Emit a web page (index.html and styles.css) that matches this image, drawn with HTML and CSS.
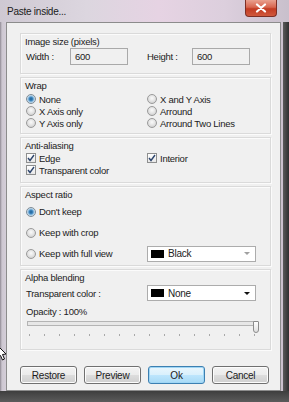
FILE: index.html
```html
<!DOCTYPE html>
<html lang="en">
  <head>
    <meta charset="UTF-8" />
    <title>Paste inside...</title>
    <link rel="stylesheet" href="styles.css">
  </head>
  <body>
    <div class="window">
      <div class="titlebar">
        <span class="title">Paste inside...</span>
        <div class="close-btn">
          <svg width="12" height="10" viewBox="0 0 12 10"><path d="M2 1.5 L10 8.5 M10 1.5 L2 8.5" stroke="#fff" stroke-width="2.2" stroke-linecap="round"/></svg>
        </div>
      </div>
      <div class="frame">
        <div class="client">

          <section class="group group-size">
            <div class="group-label">Image size (pixels)</div>
            <div class="size-row">
              <span>Width :</span>
              <div class="num-field">600</div>
              <span></span>
              <span>Height :</span>
              <div class="num-field">600</div>
            </div>
          </section>

          <section class="group group-wrap">
            <div class="group-label">Wrap</div>
            <div class="opt-grid">
              <label class="opt"><span class="radio checked"></span>None</label>
              <label class="opt"><span class="radio"></span>X and Y Axis</label>
              <label class="opt"><span class="radio"></span>X Axis only</label>
              <label class="opt"><span class="radio"></span>Arround</label>
              <label class="opt"><span class="radio"></span>Y Axis only</label>
              <label class="opt"><span class="radio"></span>Arround Two Lines</label>
            </div>
          </section>

          <section class="group group-aa">
            <div class="group-label">Anti-aliasing</div>
            <div class="opt-grid">
              <label class="opt"><span class="check"><svg width="8" height="8" viewBox="0 0 8 8"><path d="M1 4 L3 6.5 L7 1" fill="none" stroke="#2e466e" stroke-width="1.4"/></svg></span>Edge</label>
              <label class="opt"><span class="check"><svg width="8" height="8" viewBox="0 0 8 8"><path d="M1 4 L3 6.5 L7 1" fill="none" stroke="#2e466e" stroke-width="1.4"/></svg></span>Interior</label>
              <label class="opt"><span class="check"><svg width="8" height="8" viewBox="0 0 8 8"><path d="M1 4 L3 6.5 L7 1" fill="none" stroke="#2e466e" stroke-width="1.4"/></svg></span>Transparent color</label>
            </div>
          </section>

          <section class="group group-aspect">
            <div class="group-label">Aspect ratio</div>
            <div class="aspect-grid">
              <label class="opt"><span class="radio checked"></span>Don't keep</label>
              <span></span>
              <label class="opt"><span class="radio"></span>Keep with crop</label>
              <span></span>
              <label class="opt"><span class="radio"></span>Keep with full view</label>
              <div class="combo">
                <span class="swatch"></span>
                <span class="combo-text">Black</span>
                <span class="arrow arrow-dim"></span>
              </div>
            </div>
          </section>

          <section class="group group-alpha">
            <div class="group-label">Alpha blending</div>
            <div class="transp-row">
              <span>Transparent color :</span>
              <div class="combo">
                <span class="swatch"></span>
                <span class="combo-text">None</span>
                <span class="arrow"></span>
              </div>
            </div>
            <div class="opacity-label">Opacity : 100%</div>
            <div class="slider">
              <div class="track"></div>
              <div class="thumb"></div>
            </div>
            <div class="ticks">
              <i></i><i></i><i></i><i></i><i></i><i></i><i></i><i></i>
              <i></i><i></i><i></i><i></i><i></i><i></i><i></i><i></i>
            </div>
          </section>

          <div class="buttons">
            <button class="btn">Restore</button>
            <button class="btn">Preview</button>
            <button class="btn btn-default">Ok</button>
            <button class="btn">Cancel</button>
          </div>

        </div>
      </div>
      <svg class="cursor" width="7" height="16" viewBox="0 0 7 16"><path d="M-2 0 L6 8 L2.5 8.5 L4.5 13 L2.5 14 L0.5 9.5 L-2 12 Z" fill="#fff" stroke="#111" stroke-width="1"/></svg>
    </div>
  </body>
</html>
```

FILE: styles.css
```css
body{
  margin: 0;
  background-color: #ffffff;
  font-family: "Liberation Sans", Arial, sans-serif;
  font-size: 9.5px;
  letter-spacing: -0.25px;
  color: #222222;
}
.window{
  width: 289px;
  height: 402px;
  position: relative;
  display: flex;
  flex-direction: column;
  overflow: hidden;
  background: linear-gradient(to right, #cfc9d3 0, #dcd6df 30%, #e6d3e3 55%, #dccfdd 78%, #c9c0cc 100%);
}
.titlebar{
  height: 22px;
  display: flex;
  align-items: flex-start;
  padding-left: 7px;
}
.title{
  font-size: 10px;
  color: #202020;
  margin-top: 6px;
}
.close-btn{
  margin-left: auto;
  margin-right: 12px;
  width: 32px;
  height: 17px;
  box-sizing: border-box;
  border: 1px solid #7d2e24;
  border-top: none;
  border-radius: 0 0 4px 4px;
  background: linear-gradient(#e9a08e 0, #d8664f 45%, #c23b22 55%, #d0583c 100%);
  display: flex;
  align-items: center;
  justify-content: center;
}
.frame{
  flex: 1;
  display: flex;
  padding: 0 8px 11px 6px;
  background:
    linear-gradient(to bottom, transparent 369px, #3e3e3e 369px, #5b5b5b 380px),
    linear-gradient(to right, #8f8a93 0, #cdc7d1 2px, #d4ced8 6px, transparent 6px, transparent 283px, #5a5a5a 283px, #2f2f2f 289px);
}
.client{
  flex: 1;
  background-color: #f0f0f0;
  border: 1px solid #8c8c8c;
  display: flex;
  flex-direction: column;
  gap: 3px;
  padding: 10px 0 0 13px;
}
.group{
  width: 251px;
  box-sizing: border-box;
  border: 1px solid #dadada;
  box-shadow: inset 1px 1px #fbfbfb, 1px 1px #fbfbfb;
  padding: 2px 0 0 5px;
}
.group-label{
  line-height: 12px;
  margin-left: -1px;
}
.group-size{ height: 41px; }
.group-wrap{ height: 57px; }
.group-aa{ height: 46px; }
.group-aspect{ height: 80px; }
.group-alpha{ height: 81px; }

.size-row{
  display: grid;
  grid-template-columns: 44px 58px 19px 45px 58px;
  align-items: center;
  height: 17px;
}
.num-field{
  height: 17px;
  box-sizing: border-box;
  border: 1px solid #a9a9a9;
  background-color: #f0f0f0;
  padding-left: 4px;
  line-height: 15px;
}
.opt-grid{
  display: grid;
  grid-template-columns: 121px auto;
  grid-auto-rows: 12px;
}
.group-wrap .opt-grid{
  margin-top: 1px;
}
.opt{
  display: flex;
  align-items: center;
  gap: 3px;
}
.radio{
  width: 10px;
  height: 10px;
  box-sizing: border-box;
  border-radius: 50%;
  border: 1px solid #9a9a9a;
  background: radial-gradient(circle at 50% 40%, #fafafa 0, #e4e4e4 3px, #cfcfcf 5px);
}
.radio.checked{
  border-color: #7f8c96;
  background: radial-gradient(circle, #1f5f92 0, #3c86c0 1.8px, #9cc4e2 3px, #e8eef3 4.5px);
}
.check{
  width: 10px;
  height: 10px;
  box-sizing: border-box;
  border: 1px solid #8e8f8f;
  background: linear-gradient(#ffffff, #e8e8e8);
  display: flex;
  align-items: center;
  justify-content: center;
}
.aspect-grid{
  display: grid;
  grid-template-columns: 121px 109px;
  grid-auto-rows: 21px;
  align-items: center;
}
.combo{
  height: 16px;
  box-sizing: border-box;
  border: 1px solid #acacac;
  background-color: #ffffff;
  display: flex;
  align-items: center;
  padding-left: 3px;
}
.swatch{
  width: 13px;
  height: 8px;
  background-color: #000000;
  margin-right: 4px;
}
.combo-text{
  flex: 1;
  font-size: 10px;
}
.arrow{
  width: 0;
  height: 0;
  border-left: 3px solid transparent;
  border-right: 3px solid transparent;
  border-top: 3px solid #111111;
  margin-right: 5px;
}
.arrow-dim{
  border-top-color: #a0a0a0;
}
.transp-row{
  display: grid;
  grid-template-columns: 121px 109px;
  align-items: center;
  height: 18px;
}
.opacity-label{
  line-height: 12px;
  margin-top: 4px;
}
.slider{
  position: relative;
  width: 231px;
  height: 12px;
  margin-left: 1px;
}
.track{
  margin-top: 3px;
  height: 5px;
  box-sizing: border-box;
  border: 1px solid #b4b4b4;
  background-color: #e7e7e7;
}
.thumb{
  position: absolute;
  left: 226px;
  top: 0;
  width: 6px;
  height: 12px;
  box-sizing: border-box;
  border: 1px solid #8b8b8b;
  border-radius: 1px 1px 3px 3px;
  background: linear-gradient(#ffffff, #dedede);
}
.ticks{
  display: flex;
  justify-content: space-between;
  width: 226px;
  margin: 1px 0 0 3px;
}
.ticks i{
  width: 1px;
  height: 2px;
  background-color: #a8a8a8;
}
.buttons{
  display: flex;
  gap: 7px;
  margin-top: 13px;
}
.btn{
  width: 57px;
  height: 18px;
  padding: 0;
  box-sizing: border-box;
  border: 1px solid #707070;
  border-radius: 3px;
  background: linear-gradient(#f3f3f3 0, #ebebeb 50%, #dddddd 50%, #cfcfcf 100%);
  box-shadow: inset 0 0 0 1px #fcfcfc;
  font-family: inherit;
  font-size: 10px;
  letter-spacing: -0.25px;
  color: #1b1b1b;
}
.btn-default{
  border-color: #3c7fb1;
  background: linear-gradient(#eaf6fd 0, #d9f0fc 50%, #bee6fd 50%, #a7d9f5 100%);
  box-shadow: inset 0 0 0 1px #9fd6f5;
}
.cursor{
  position: absolute;
  left: 0;
  top: 346px;
}
```
